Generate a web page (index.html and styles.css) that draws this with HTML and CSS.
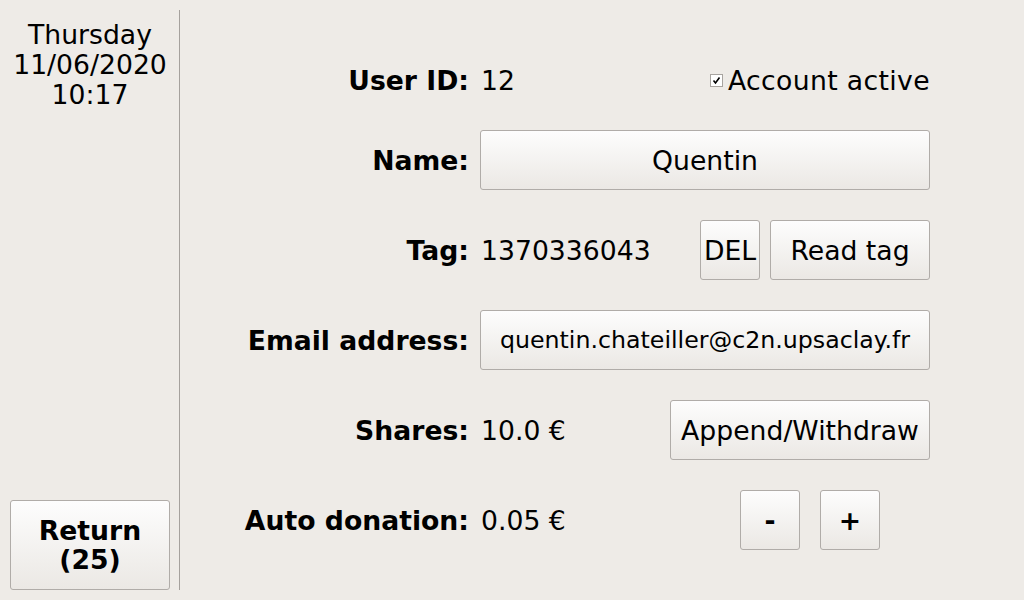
FILE: index.html
```html
<!DOCTYPE html>
<html>
<head>
<meta charset="utf-8">
<link rel="stylesheet" href="styles.css">
</head>
<body>
<div class="app">
  <aside class="sidebar">
    <div class="clock">Thursday<br>11/06/2020<br>10:17</div>
    <button class="btn return-btn">Return<br>(25)</button>
  </aside>
  <main class="form">
    <div class="label">User ID:</div>
    <div class="value">
      <span class="text">12</span>
      <label class="check">
        <span class="box"><svg width="9" height="9" viewBox="0 0 9 9"><path d="M1.5 4.5 L3.5 7 L7.5 1.5" fill="none" stroke="#000" stroke-width="1.6"/></svg></span>
        <span class="check-text">Account active</span>
      </label>
    </div>

    <div class="label">Name:</div>
    <div class="value"><button class="btn wide">Quentin</button></div>

    <div class="label">Tag:</div>
    <div class="value">
      <span class="text">1370336043</span>
      <div class="actions">
        <button class="btn del">DEL</button>
        <button class="btn read">Read tag</button>
      </div>
    </div>

    <div class="label">Email address:</div>
    <div class="value"><button class="btn wide email">quentin.chateiller@c2n.upsaclay.fr</button></div>

    <div class="label">Shares:</div>
    <div class="value">
      <span class="text">10.0 €</span>
      <button class="btn append">Append/Withdraw</button>
    </div>

    <div class="label">Auto donation:</div>
    <div class="value">
      <span class="text">0.05 €</span>
      <div class="actions steppers">
        <button class="btn step">-</button>
        <button class="btn step">+</button>
      </div>
    </div>
  </main>
</div>
</body>
</html>
```
FILE: styles.css
```css
html, body {
  margin: 0;
  padding: 0;
}
body {
  background: #eeebe7;
  font-family: "DejaVu Sans", sans-serif;
  font-size: 26.67px;
  color: #000;
  width: 1024px;
  height: 600px;
  overflow: hidden;
}
.app {
  display: flex;
  height: 600px;
}
.sidebar {
  width: 169px;
  margin: 10px 0;
  padding: 10px 0 0 10px;
  border-right: 1px solid #a5a19d;
  display: flex;
  flex-direction: column;
  justify-content: space-between;
  box-sizing: content-box;
  height: 570px;
}
.clock {
  width: 160px;
  text-align: center;
  line-height: 30px;
}
.btn {
  font-family: "DejaVu Sans", sans-serif;
  font-size: 26.67px;
  color: #000;
  background: linear-gradient(#fdfdfd, #ebe8e4);
  border: 1px solid #b0aca8;
  border-radius: 3px;
  padding: 0;
  margin: 0;
  height: 60px;
  box-sizing: border-box;
}
.return-btn {
  width: 160px;
  height: 90px;
  font-weight: bold;
  line-height: 29px;
}
.form {
  flex: 1;
  display: grid;
  grid-template-columns: 1fr 450px;
  grid-template-rows: 40px repeat(5, 60px);
  column-gap: 11px;
  row-gap: 30px;
  padding: 60px 94px 0 0;
  align-content: start;
}
.label {
  font-weight: bold;
  text-align: right;
  display: flex;
  align-items: center;
  justify-content: flex-end;
}
.value {
  display: flex;
  align-items: center;
  justify-content: space-between;
}
.text {
  margin-left: 1px;
}
.check {
  display: flex;
  align-items: center;
  gap: 5px;
}
.check-text {
  letter-spacing: 0.35px;
}
.box {
  width: 11px;
  height: 11px;
  border: 1px solid #a8a4a0;
  background: #fff;
  display: flex;
  align-items: center;
  justify-content: center;
}
.wide {
  width: 450px;
}
.email {
  font-size: 23.7px;
}
.actions {
  display: flex;
  gap: 10px;
}
.del {
  width: 60px;
}
.read {
  width: 160px;
}
.append {
  width: 260px;
}
.steppers {
  gap: 20px;
  margin-right: 50px;
}
.step {
  width: 60px;
  font-weight: bold;
}
```
